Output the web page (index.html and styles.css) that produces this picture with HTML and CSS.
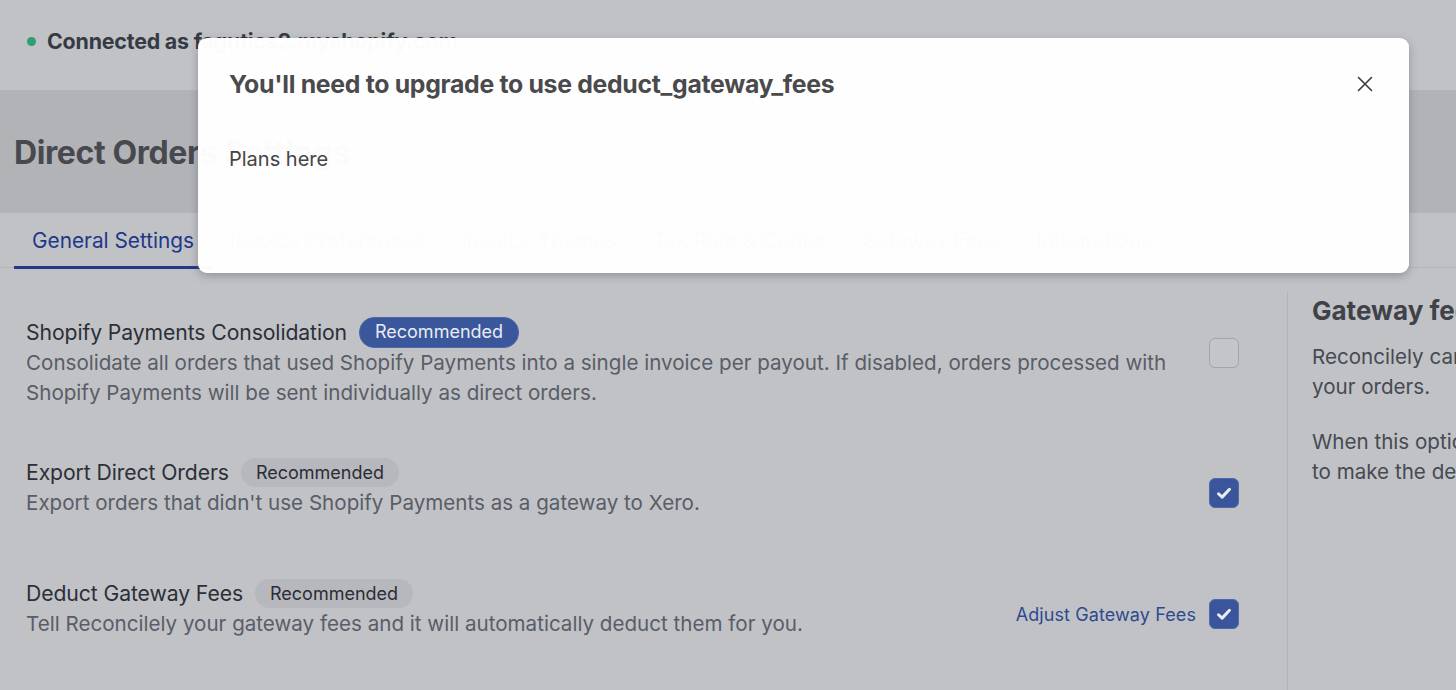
FILE: index.html
```html
<!DOCTYPE html>
<html>
<head>
<meta charset="utf-8">
<link rel="stylesheet" href="styles.css">
</head>
<body>
<div class="page">
  <div class="topbar">
    <span class="dot"></span>
    <span class="conn">Connected as fagutics2.myshopify.com</span>
  </div>
  <div class="header">
    <h1 class="title">Direct Orders Settings</h1>
  </div>
  <div class="tabs">
    <div class="tab active">General Settings</div>
    <div class="tab">Invoice Preferences</div>
    <div class="tab">Invoice Themes</div>
    <div class="tab">Tax Rate &amp; Codes</div>
    <div class="tab">Gateway Fees</div>
    <div class="tab">Integrations</div>
  </div>
  <div class="main">
    <div class="settings">
      <div class="row r1">
        <div class="info">
          <div class="head"><span class="name">Shopify Payments Consolidation</span><span class="badge blue">Recommended</span></div>
          <p class="desc">Consolidate all orders that used Shopify Payments into a single invoice per payout. If disabled, orders processed with Shopify Payments will be sent individually as direct orders.</p>
        </div>
        <div class="ctrl"><span class="cb"></span></div>
      </div>
      <div class="row r2">
        <div class="info">
          <div class="head"><span class="name">Export Direct Orders</span><span class="badge">Recommended</span></div>
          <p class="desc">Export orders that didn't use Shopify Payments as a gateway to Xero.</p>
        </div>
        <div class="ctrl"><span class="cb on"><svg viewBox="0 0 16 16" width="20" height="20"><path d="M3.6 8.6 L6.5 11.3 L12.4 5" fill="none" stroke="#e9ecf4" stroke-width="2.4" stroke-linecap="round" stroke-linejoin="round"/></svg></span></div>
      </div>
      <div class="row r3">
        <div class="info">
          <div class="head"><span class="name">Deduct Gateway Fees</span><span class="badge">Recommended</span></div>
          <p class="desc">Tell Reconcilely your gateway fees and it will automatically deduct them for you.</p>
        </div>
        <div class="ctrl"><a class="link">Adjust Gateway Fees</a><span class="cb on"><svg viewBox="0 0 16 16" width="20" height="20"><path d="M3.6 8.6 L6.5 11.3 L12.4 5" fill="none" stroke="#e9ecf4" stroke-width="2.4" stroke-linecap="round" stroke-linejoin="round"/></svg></span></div>
      </div>
    </div>
    <aside class="side">
      <h2 class="side-title">Gateway fees</h2>
      <p class="side-p">Reconcilely can deduct gateway fees from<br>your orders.</p>
      <p class="side-p">When this option is enabled, Reconcilely will try<br>to make the deductions for you.</p>
    </aside>
  </div>
</div>
<div class="modal">
  <div class="modal-head">
    <h3 class="modal-title">You'll need to upgrade to use deduct_gateway_fees</h3>
    <svg class="close" viewBox="0 0 16 16" width="16" height="16"><path d="M1.5 1.5 L14.5 14.5 M14.5 1.5 L1.5 14.5" stroke="#3a3a3a" stroke-width="1.6" stroke-linecap="round"/></svg>
  </div>
  <p class="modal-body">Plans here</p>
</div>
</body>
</html>
```
FILE: styles.css
```css
html, body {
  margin: 0;
  padding: 0;
  width: 1456px;
  height: 690px;
  overflow: hidden;
  background: #c1c2c6;
  font-family: Inter, "Liberation Sans", sans-serif;
}
.page {
  width: 1760px;
}
.topbar {
  height: 90px;
  box-sizing: border-box;
  padding: 28px 0 0 27px;
  display: flex;
  align-items: flex-start;
  background: #c1c2c6;
}
.dot {
  width: 9px;
  height: 9px;
  border-radius: 50%;
  background: #2f9e73;
  margin: 9px 11px 0 0;
}
.conn {
  font-size: 21.4px;
  font-weight: 700;
  color: #363a44;
  line-height: 27px;
  letter-spacing: -0.2px;
}
.header {
  height: 123px;
  background: #b2b3b7;
  box-sizing: border-box;
  padding: 43px 0 0 14px;
}
.title {
  margin: 0;
  font-size: 32px;
  line-height: 40px;
  font-weight: 700;
  color: #48494e;
  letter-spacing: -0.4px;
}
.tabs {
  height: 55px;
  box-sizing: border-box;
  border-bottom: 1px solid #b3b4b8;
  display: flex;
  padding-left: 14px;
}
.tab {
  padding: 14px 18px 0;
  font-size: 20.8px;
  line-height: 27px;
  color: #5b5e66;
}
.tab.active {
  color: #20378a;
  border-bottom: 3px solid #22388a;
  margin-bottom: -1px;
  height: 27px;
  padding-bottom: 12px;
}
.main {
  display: flex;
}
.settings {
  flex: 0 0 1288px;
  width: 1288px;
  box-sizing: border-box;
  border-right: 1px solid #b3b4b8;
  padding: 25px 48px 80px 26px;
  margin-top: 24px;
}
.row {
  display: flex;
  justify-content: space-between;
  align-items: flex-start;
}
.r2 { margin-top: 49px; }
.r3 { margin-top: 60px; }
.info { flex: 1; }
.head {
  display: flex;
  align-items: center;
  gap: 12px;
  height: 30px;
}
.name {
  font-size: 21.2px;
  line-height: 27px;
  color: #2c2f38;
  letter-spacing: -0.1px;
}
.badge {
  font-size: 18px;
  line-height: 29px;
  height: 29px;
  padding: 0 15px;
  border-radius: 15px;
  background: #b7b8be;
  color: #2a2d35;
}
.badge.blue {
  background: #3b579c;
  color: #e8ebf3;
  border: 1px solid #4d68aa;
  line-height: 27px;
}
.desc {
  margin: 1px 0 0;
  font-size: 20.6px;
  line-height: 30px;
  color: #595d67;
  max-width: 1160px;
}
.ctrl {
  display: flex;
  align-items: center;
  gap: 13px;
  padding-top: 21px;
}
.cb {
  width: 30px;
  height: 30px;
  box-sizing: border-box;
  border-radius: 6px;
  border: 1.5px solid #a3a5ab;
  background: #c4c5c9;
  display: flex;
  align-items: center;
  justify-content: center;
}
.cb.on {
  background: #3a559b;
  border-color: #5069a8;
}
.link {
  font-size: 18px;
  color: #2e4a8f;
  letter-spacing: 0.1px;
}
.side {
  padding: 0 0 0 24px;
  width: 520px;
  white-space: nowrap;
}
.side-title {
  margin: 26px 0 0;
  font-size: 26px;
  line-height: 34px;
  font-weight: 700;
  color: #3f4249;
}
.side-p {
  margin: 14px 0 0;
  font-size: 20.6px;
  line-height: 30px;
  color: #464a52;
}
.side-p + .side-p { margin-top: 25px; }
.modal {
  position: absolute;
  left: 198px;
  top: 38px;
  width: 1211px;
  height: 235px;
  box-sizing: border-box;
  background: rgba(255, 255, 255, 0.98);
  border-radius: 9px;
  box-shadow: 0 3px 8px rgba(60, 60, 70, 0.35);
  padding: 30px 36px 0 31px;
}
.modal-head {
  display: flex;
  justify-content: space-between;
  align-items: center;
}
.modal-title {
  margin: 0;
  font-size: 24.8px;
  line-height: 32px;
  font-weight: 700;
  color: #4a4a4c;
  letter-spacing: -0.3px;
}
.close {
  width: 16px;
  height: 16px;
}
.modal-body {
  margin: 46px 0 0;
  font-size: 20px;
  line-height: 27px;
  color: #444446;
}
```
